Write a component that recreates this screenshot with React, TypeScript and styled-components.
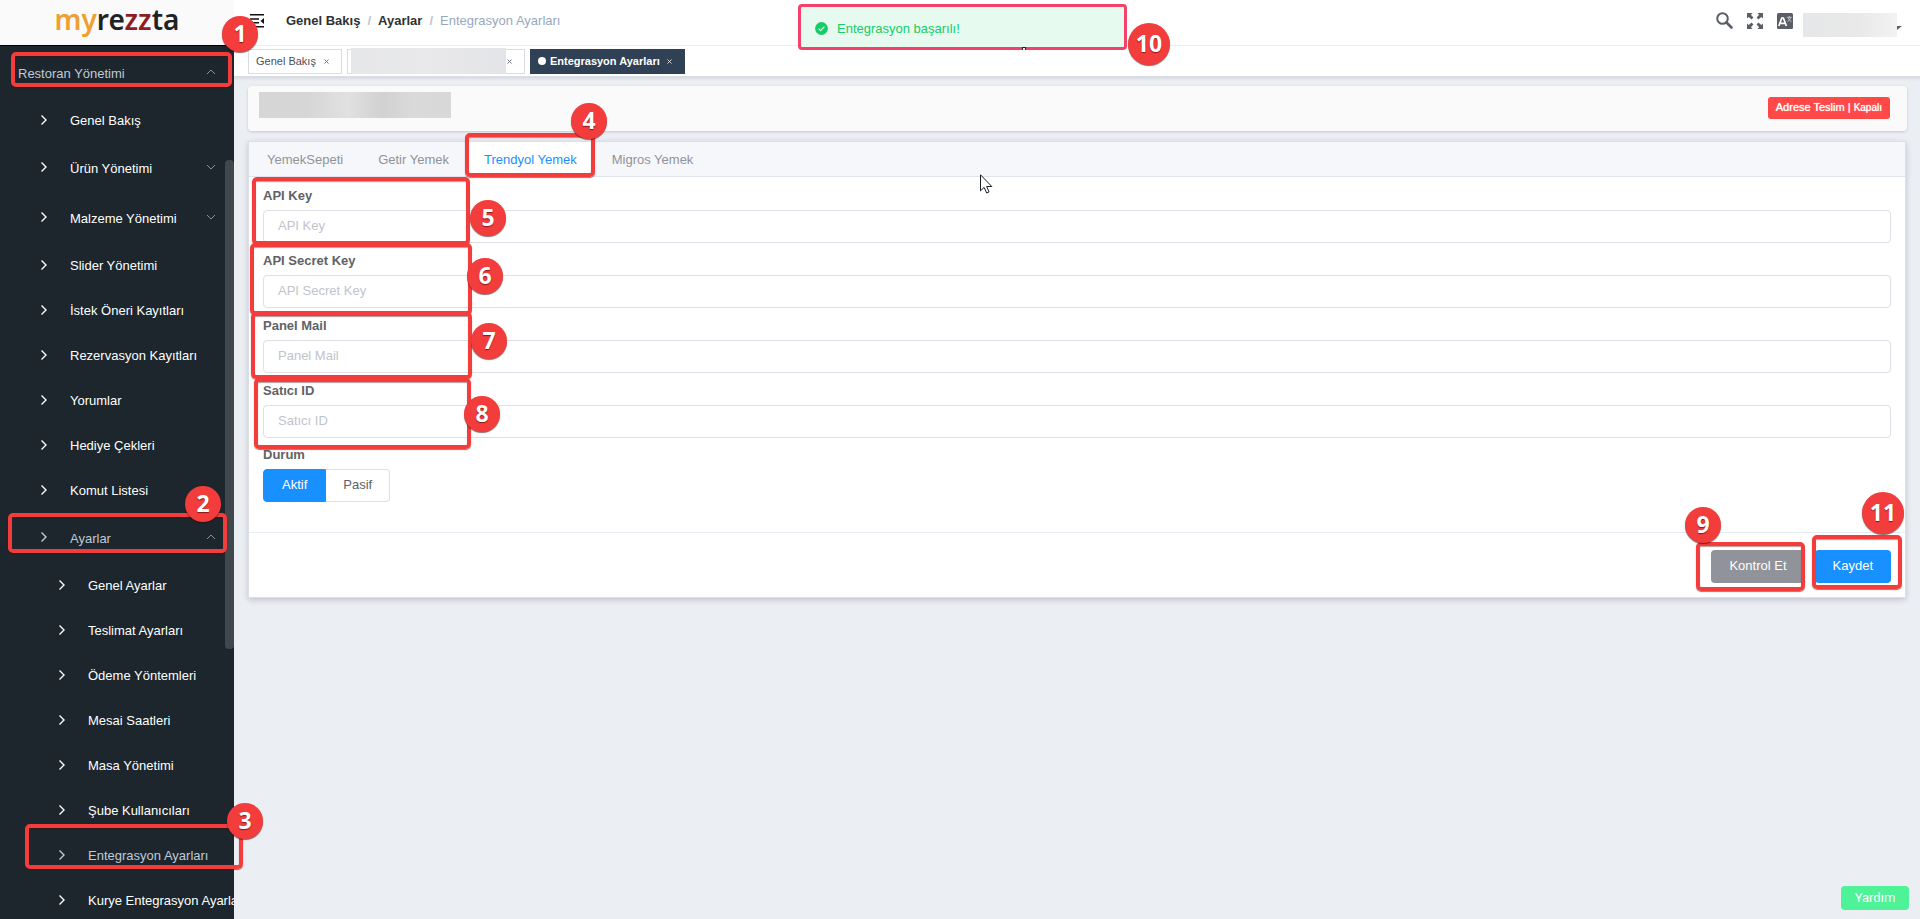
import React, { useState } from "react";
import styled, { createGlobalStyle, css } from "styled-components";

const GlobalStyle = createGlobalStyle`
  *, *::before, *::after { box-sizing: border-box; }
  body {
    margin: 0;
    background: #ebeef3;
    color: #606266;
    font-family: "Liberation Sans", Arial, sans-serif;
    font-size: 13px;
  }
  button, input { font: inherit; }
  a { color: inherit; text-decoration: none; }
`;

const red = "#f33c3c";

/* ---------- shell ---------- */

const Shell = styled.div`
  position: relative;
  display: grid;
  grid-template-columns: 234px minmax(0, 1fr);
  height: 100vh;
  overflow: hidden;
`;

const Sidebar = styled.aside`
  position: relative;
  display: flex;
  flex-direction: column;
  min-height: 0;
  overflow: hidden;
  background: #1c262c;
`;

const Logo = styled.a`
  flex: none;
  height: 46px;
  background: #fafafa;
  border-bottom: 1px solid #000;
  color: #222;
  font: 600 28px/38px "Noto Sans", sans-serif;
  text-align: center;
`;

const LogoPart = styled.span<{ $color: string }>`
  color: ${(p) => p.$color};
`;

const Menu = styled.ul`
  list-style: none;
  margin: 0;
  padding: 2px 0 0;
`;

const rowStyle = css<{ $level: number; $active?: boolean }>`
  display: flex;
  align-items: center;
  width: 100%;
  padding: 0 18px 0 ${(p) => (p.$level === 0 ? 18 : p.$level === 1 ? 38 : 56)}px;
  border: 0;
  background: none;
  color: ${(p) => (p.$active ? "#bfcbd9" : "#fff")};
  text-align: left;
  white-space: nowrap;
  cursor: pointer;
`;

const MenuLink = styled.a<{ $level: number; $active?: boolean }>`
  ${rowStyle}
  height: 45px;
`;

const MenuGroup = styled.button<{ $level: number; $active?: boolean }>`
  ${rowStyle}
  height: 50px;
`;

const MenuIcon = styled.svg`
  flex: none;
  width: 12px;
  height: 14px;
  margin-right: 20px;
  margin-bottom: 2px;
`;

const Caret = styled.svg`
  flex: none;
  width: 10px;
  height: 6px;
  margin-left: auto;
  margin-bottom: 2px;
`;

const ScrollThumb = styled.div`
  position: absolute;
  top: 160px;
  right: 0;
  width: 9px;
  height: 489px;
  border-radius: 4px;
  background: #40484e;
`;

const Main = styled.main`
  display: flex;
  flex-direction: column;
  min-width: 0;
`;

/* ---------- header ---------- */

const TopBar = styled.header`
  display: flex;
  align-items: center;
  height: 46px;
  padding: 0 18px 4px 16px;
  background: #fff;
  border-bottom: 1px solid #f0f1f3;
`;

const IconButton = styled.button`
  display: flex;
  padding: 0;
  border: 0;
  background: none;
  color: #5a5e66;
  cursor: pointer;
`;

const Crumbs = styled.nav`
  display: flex;
  gap: 7px;
  margin-left: 22px;
  color: #97a8be;
`;

const Crumb = styled.a`
  color: #303133;
  font-weight: 700;
`;

const Slash = styled.span`
  color: #c0c4cc;
  font-weight: 700;
`;

const Tools = styled.div`
  display: flex;
  align-items: center;
  gap: 14px;
  margin-left: auto;
`;

const Account = styled.button`
  display: flex;
  align-items: flex-end;
  margin: 9px 0 0 -4px;
  padding: 0;
  border: 0;
  background: none;
`;

const AccountMask = styled.span`
  width: 94px;
  height: 24px;
  background: linear-gradient(90deg, #e6e7e8, #e9e9e9 60%, #f2f2f2);
`;

const Triangle = styled.span`
  margin-bottom: 7px;
  border: 3px solid transparent;
  border-top: 4px solid #5a5e66;
  border-left: 0;
  border-right-width: 5px;
  border-bottom: 0;
`;

const TagBar = styled.div`
  display: flex;
  gap: 5px;
  flex: none;
  height: 32px;
  padding: 3px 14px 0;
  background: #fff;
  border-bottom: 2px solid #d8dce5;
  box-shadow: 0 1px 3px rgba(0, 0, 0, 0.08);
`;

const Tag = styled.div<{ $active?: boolean }>`
  display: flex;
  align-items: center;
  gap: ${(p) => (p.$active ? 6 : 7)}px;
  height: 25px;
  padding: 0 12px 1px 7px;
  border: 1px solid ${(p) => (p.$active ? "#304156" : "#d8dce5")};
  background: ${(p) => (p.$active ? "#304156" : "#fff")};
  color: ${(p) => (p.$active ? "#fff" : "#495060")};
  font-size: 11px;
  font-weight: ${(p) => (p.$active ? 700 : 400)};
`;

const TagMask = styled.span`
  width: 155px;
  height: 26px;
  margin: 0 -7px 0 -4px;
  background: linear-gradient(90deg, #e6e7e9, #e9e9eb 50%, #e3e4e7);
`;

const Dot = styled.span`
  width: 8px;
  height: 8px;
  margin-right: -2px;
  border-radius: 50%;
  background: #fff;
`;

const CloseTag = styled.button`
  display: flex;
  margin-top: 1px;
  margin-left: 1px;
  padding: 0;
  border: 0;
  background: none;
  color: inherit;
`;

/* ---------- content ---------- */

const Content = styled.div`
  display: flex;
  flex-direction: column;
  gap: 10px;
  padding: 8px 13px 0 14px;
`;

const BranchBar = styled.section`
  display: flex;
  justify-content: space-between;
  align-items: flex-start;
  height: 45px;
  padding: 6px 17px 0 11px;
  border-radius: 4px;
  background: #fafafa;
  box-shadow: 0 1px 3px rgba(0, 0, 0, 0.16);
`;

const BranchMask = styled.div`
  width: 192px;
  height: 26px;
  background: linear-gradient(90deg, #d6d6d6 0 25%, #e1e1e1 46%, #d1d1d1 64%, #dadada 80%, #d8d8d8);
`;

const StatusButton = styled.button`
  height: 22px;
  margin-top: 5px;
  padding: 0 8px 2px;
  border: 0;
  border-radius: 3px;
  background: #ff4949;
  color: #fff;
  font-size: 11px;
  text-shadow: 0 0 1px #fff;
`;

const Small = styled.span`
  font-size: 10px;
`;

const Card = styled.section`
  margin-right: 1px;
  border: 1px solid #dcdfe6;
  background: #fff;
  box-shadow: 0 2px 6px rgba(0, 0, 40, 0.18);
`;

const Tabs = styled.div`
  display: flex;
  height: 35px;
  border-bottom: 1px solid #dfe4ed;
  background: #f5f7fa;
`;

const Tab = styled.button<{ $active?: boolean }>`
  height: 34px;
  padding: 0 17px 0 18px;
  border: 0;
  background: ${(p) => (p.$active ? "#fff" : "none")};
  color: ${(p) => (p.$active ? "#1890ff" : "#909399")};
  cursor: pointer;
`;

const Form = styled.form`
  display: flex;
  flex-direction: column;
`;

const Fields = styled.div`
  display: flex;
  flex-direction: column;
  padding: 2px 14px 30px;
`;

const Field = styled.div`
  display: flex;
  flex-direction: column;
  height: 65px;
`;

const Label = styled.label`
  height: 31px;
  font-weight: 700;
  line-height: 33px;
`;

const Input = styled.input`
  width: 100%;
  height: 33px;
  padding: 0 14px 2px;
  border: 1px solid #dcdfe6;
  border-radius: 4px;
  background: #fff;
  color: #606266;
  outline: 0;
  &::placeholder { color: #c0c4cc; opacity: 1; }
`;

const RadioSet = styled.fieldset`
  margin: 0;
  padding: 0;
  border: 0;
`;

const Legend = styled.legend`
  padding: 0;
  height: 30px;
  font-weight: 700;
  line-height: 32px;
`;

const RadioRow = styled.div`
  display: flex;
`;

const Radio = styled.input`
  position: absolute;
  opacity: 0;
`;

const RadioLabel = styled.label<{ $on: boolean; $first?: boolean }>`
  height: 33px;
  padding: 0 ${(p) => (p.$first ? 18 : 17)}px;
  border: 1px solid ${(p) => (p.$on ? "#1890ff" : "#dcdfe6")};
  border-left-width: ${(p) => (p.$first ? 1 : 0)}px;
  border-radius: ${(p) => (p.$first ? "4px 0 0 4px" : "0 4px 4px 0")};
  background: ${(p) => (p.$on ? "#1890ff" : "#fff")};
  color: ${(p) => (p.$on ? "#fff" : "#606266")};
  line-height: 30px;
  cursor: pointer;
`;

const Actions = styled.div`
  display: flex;
  justify-content: flex-end;
  gap: 10px;
  padding: 17px 14px 14px;
  border-top: 1px solid #e6ebf5;
`;

const Action = styled.button<{ $tone: string }>`
  height: 33px;
  padding: 0 18px 2px;
  border: 0;
  border-radius: 4px;
  background: ${(p) => p.$tone};
  color: #fff;
`;

/* ---------- floating items ---------- */

const HelpButton = styled.button`
  position: absolute;
  right: 11px;
  bottom: 9px;
  width: 68px;
  height: 24px;
  padding: 0 0 2px;
  border: 0;
  border-radius: 4px;
  background: #4ef297;
  color: #fff;
  font: 400 13px Roboto, sans-serif;
`;

const Toast = styled.div`
  position: absolute;
  top: 4px;
  left: calc(50% - 162px);
  display: flex;
  align-items: center;
  gap: 9px;
  width: 329px;
  height: 46px;
  padding: 3px 14px 0;
  border: 3px solid #f2416b;
  border-radius: 4px;
  background: #e7faf0;
  color: #13ce66;
`;

const ResizeHandle = styled.span`
  position: absolute;
  bottom: -3px;
  left: 221px;
  width: 4px;
  height: 3px;
  border: 1px solid #222;
  border-bottom: 0;
  background: #fff;
`;

const Pointer = styled.svg`
  position: absolute;
  top: 174px;
  left: calc(50% + 20px);
  width: 13px;
  height: 20px;
`;

type Spot = { $x: number; $y: number; $from?: "left" | "right" | "center" };

const place = css<Spot>`
  position: absolute;
  top: ${(p) => p.$y}px;
  ${(p) =>
    p.$from === "right"
      ? `right: ${p.$x}px;`
      : p.$from === "center"
        ? `left: calc(50% + ${p.$x}px);`
        : `left: ${p.$x}px;`}
  pointer-events: none;
`;

const Frame = styled.div<Spot & { $w: number; $h: number }>`
  ${place}
  width: ${(p) => p.$w}px;
  height: ${(p) => p.$h}px;
  border: 4px solid ${red};
  border-radius: 5px;
  box-shadow: 0 1px 1px rgba(90, 0, 0, 0.55), inset 0 1px 1px rgba(90, 0, 0, 0.4);
`;

const Badge = styled.div<Spot & { $large?: boolean }>`
  ${place}
  display: flex;
  align-items: center;
  justify-content: center;
  width: ${(p) => (p.$large ? 42 : 36)}px;
  height: ${(p) => (p.$large ? 42 : 36)}px;
  padding-bottom: 1px;
  border-radius: 50%;
  background: ${red};
  box-shadow: 0 1px 1px rgba(60, 0, 0, 0.6);
  color: #fff;
  font: 700 23px/1 "Open Sans", sans-serif;
  text-shadow: 0 1px 1px rgba(60, 0, 0, 0.6);
`;

/* ---------- data ---------- */

type Entry = { text: string; level: number; group?: "open" | "closed"; active?: boolean };

const entries: Entry[] = [
  { text: "Restoran Yönetimi", level: 0, group: "open", active: true },
  { text: "Genel Bakış", level: 1 },
  { text: "Ürün Yönetimi", level: 1, group: "closed" },
  { text: "Malzeme Yönetimi", level: 1, group: "closed" },
  { text: "Slider Yönetimi", level: 1 },
  { text: "İstek Öneri Kayıtları", level: 1 },
  { text: "Rezervasyon Kayıtları", level: 1 },
  { text: "Yorumlar", level: 1 },
  { text: "Hediye Çekleri", level: 1 },
  { text: "Komut Listesi", level: 1 },
  { text: "Ayarlar", level: 1, group: "open", active: true },
  { text: "Genel Ayarlar", level: 2 },
  { text: "Teslimat Ayarları", level: 2 },
  { text: "Ödeme Yöntemleri", level: 2 },
  { text: "Mesai Saatleri", level: 2 },
  { text: "Masa Yönetimi", level: 2 },
  { text: "Şube Kullanıcıları", level: 2 },
  { text: "Entegrasyon Ayarları", level: 2, active: true },
  { text: "Kurye Entegrasyon Ayarları", level: 2 },
];

const tabs = ["YemekSepeti", "Getir Yemek", "Trendyol Yemek", "Migros Yemek"];

const fields = [
  { id: "api-key", label: "API Key" },
  { id: "api-secret", label: "API Secret Key" },
  { id: "panel-mail", label: "Panel Mail" },
  { id: "seller-id", label: "Satıcı ID" },
];

const frames: (Spot & { $w: number; $h: number })[] = [
  { $x: 11, $y: 52, $w: 221, $h: 35 },
  { $x: 8, $y: 513, $w: 219, $h: 40 },
  { $x: 25, $y: 824, $w: 218, $h: 45 },
  { $x: 465, $y: 133, $w: 130, $h: 44 },
  { $x: 252, $y: 177, $w: 218, $h: 68 },
  { $x: 250, $y: 243, $w: 222, $h: 72 },
  { $x: 251, $y: 312, $w: 221, $h: 67 },
  { $x: 254, $y: 378, $w: 217, $h: 71 },
  { $x: 115, $y: 542, $w: 109, $h: 49, $from: "right" },
  { $x: 18, $y: 535, $w: 90, $h: 54, $from: "right" },
];

const badges: (Spot & { n: number })[] = [
  { n: 1, $x: 222, $y: 16 },
  { n: 2, $x: 185, $y: 486 },
  { n: 3, $x: 227, $y: 803 },
  { n: 4, $x: 571, $y: 103 },
  { n: 5, $x: 470, $y: 200 },
  { n: 6, $x: 467, $y: 258 },
  { n: 7, $x: 471, $y: 323 },
  { n: 8, $x: 464, $y: 396 },
  { n: 9, $x: 199, $y: 507, $from: "right" },
  { n: 10, $x: 168, $y: 23, $from: "center" },
  { n: 11, $x: 16, $y: 492, $from: "right" },
];

/* ---------- icons ---------- */

const CloseIcon = () => (
  <svg width="5" height="5" viewBox="0 0 5 5" stroke="currentColor" strokeWidth="1">
    <path d="M.5 .5l4 4M4.5 .5l-4 4" opacity=".8" />
  </svg>
);

const FoldIcon = () => (
  <svg width="14" height="14" viewBox="0 0 14 14" fill="#111">
    <path d="M0 0h14v1.4H0zM0 4.3h9v1.4H0zM0 8h9v1.4H0zM0 12h14v1.4H0zM14 4v6l-3.5-3z" />
  </svg>
);

const SearchIcon = () => (
  <svg width="17" height="17" viewBox="0 0 17 17" fill="none" stroke="currentColor">
    <circle cx="6.5" cy="6.5" r="5.3" strokeWidth="2" />
    <path d="M10.5 10.5l5 5" strokeWidth="2.6" strokeLinecap="round" />
  </svg>
);

const ExpandIcon = () => (
  <svg width="16" height="16" viewBox="0 0 16 16" fill="currentColor">
    <path d="M0 0h5.6L3.9 1.7 6.4 4.6 4.6 6.4 1.7 3.9 0 5.6zM16 0v5.6l-1.7-1.7-2.9 2.5-1.8-1.8 2.5-2.9L10.4 0zM0 16v-5.6l1.7 1.7 2.9-2.5 1.8 1.8-2.5 2.9L5.6 16zM16 16h-5.6l1.7-1.7-2.5-2.9 1.8-1.8 2.9 2.5 1.7-1.7z" />
  </svg>
);

const LanguageIcon = () => (
  <svg width="16" height="16" viewBox="0 0 16 16">
    <rect width="16" height="16" rx="1.5" fill="currentColor" />
    <path d="M1.8 13l3-8h1.6l3 8M3 10.4h5" fill="none" stroke="#fff" strokeWidth="1.7" />
    <path d="M9.8 4.3h5M12.3 3v1.3M10.5 8.6c1.6-.8 2.8-2.3 3.2-4.2M14.5 8.6c-1.6-.8-2.9-2.3-3.3-4.2" fill="none" stroke="#d5d7da" strokeWidth=".8" />
  </svg>
);

const CheckIcon = () => (
  <svg width="13" height="13" viewBox="0 0 13 13">
    <circle cx="6.5" cy="6.5" r="6.4" fill="#13ce66" />
    <path d="M3.6 6.7l2 2 3.8-4" fill="none" stroke="#e7faf0" strokeWidth="1.2" />
  </svg>
);

function MenuRow({ entry }: { entry: Entry }) {
  const body = (
    <>
      {entry.level > 0 && (
        <MenuIcon viewBox="0 0 12 14" fill="none" stroke="currentColor" strokeWidth="1.4">
          <path d="M3.5 2.5L8 7l-4.5 4.5" />
        </MenuIcon>
      )}
      {entry.text}
      {entry.group && (
        <Caret viewBox="0 0 10 6" fill="none" stroke="#8b9399" strokeWidth="1">
          <path d={entry.group === "open" ? "M1 5l4-4 4 4" : "M1 1l4 4 4-4"} />
        </Caret>
      )}
    </>
  );
  return (
    <li>
      {entry.group ? (
        <MenuGroup $level={entry.level} $active={entry.active} aria-expanded={entry.group === "open"}>
          {body}
        </MenuGroup>
      ) : (
        <MenuLink href="#" $level={entry.level} $active={entry.active}>
          {body}
        </MenuLink>
      )}
    </li>
  );
}

export default function App() {
  const [tab, setTab] = useState(2);
  const [active, setActive] = useState(true);

  return (
    <Shell>
      <GlobalStyle />
      <Sidebar>
        <Logo href="#">
          <LogoPart $color="#eda033">my</LogoPart>re<LogoPart $color="#8e1c22">zz</LogoPart>ta
        </Logo>
        <Menu>
          {entries.map((entry) => (
            <MenuRow key={entry.text} entry={entry} />
          ))}
        </Menu>
        <ScrollThumb />
      </Sidebar>

      <Main>
        <TopBar>
          <IconButton aria-label="Menü"><FoldIcon /></IconButton>
          <Crumbs>
            <Crumb href="#">Genel Bakış</Crumb>
            <Slash>/</Slash>
            <Crumb href="#">Ayarlar</Crumb>
            <Slash>/</Slash>
            <span>Entegrasyon Ayarları</span>
          </Crumbs>
          <Tools>
            <IconButton aria-label="Ara"><SearchIcon /></IconButton>
            <IconButton aria-label="Tam ekran"><ExpandIcon /></IconButton>
            <IconButton aria-label="Dil"><LanguageIcon /></IconButton>
            <Account aria-label="Hesap"><AccountMask /><Triangle /></Account>
          </Tools>
        </TopBar>
        <TagBar>
          <Tag>Genel Bakış<CloseTag aria-label="Kapat"><CloseIcon /></CloseTag></Tag>
          <Tag><TagMask /><CloseTag aria-label="Kapat"><CloseIcon /></CloseTag></Tag>
          <Tag $active><Dot />Entegrasyon Ayarları<CloseTag aria-label="Kapat"><CloseIcon /></CloseTag></Tag>
        </TagBar>

        <Content>
          <BranchBar>
            <BranchMask />
            <StatusButton>Adrese Teslim | <Small>Kapalı</Small></StatusButton>
          </BranchBar>
          <Card>
            <Tabs role="tablist">
              {tabs.map((name, i) => (
                <Tab key={name} role="tab" aria-selected={i === tab} $active={i === tab} onClick={() => setTab(i)}>
                  {name}
                </Tab>
              ))}
            </Tabs>
            <Form onSubmit={(e) => e.preventDefault()}>
              <Fields>
                {fields.map((f) => (
                  <Field key={f.id}>
                    <Label htmlFor={f.id}>{f.label}</Label>
                    <Input id={f.id} placeholder={f.label} />
                  </Field>
                ))}
                <RadioSet>
                  <Legend>Durum</Legend>
                  <RadioRow>
                    <RadioLabel $first $on={active}>
                      <Radio type="radio" name="durum" checked={active} onChange={() => setActive(true)} />
                      Aktif
                    </RadioLabel>
                    <RadioLabel $on={!active}>
                      <Radio type="radio" name="durum" checked={!active} onChange={() => setActive(false)} />
                      Pasif
                    </RadioLabel>
                  </RadioRow>
                </RadioSet>
              </Fields>
              <Actions>
                <Action type="button" $tone="#909399">Kontrol Et</Action>
                <Action type="submit" $tone="#1890ff">Kaydet</Action>
              </Actions>
            </Form>
          </Card>
        </Content>
      </Main>

      <HelpButton>Yardım</HelpButton>
      <Toast role="status">
        <CheckIcon />
        Entegrasyon başarılı!
        <ResizeHandle />
      </Toast>
      {frames.map((f, i) => (
        <Frame key={i} {...f} />
      ))}
      {badges.map(({ n, ...spot }) => (
        <Badge key={n} {...spot} $large={n > 9}>{n}</Badge>
      ))}
      <Pointer viewBox="0 0 13 20" fill="#fff" stroke="#1a1a28" strokeWidth="1">
        <path d="M.5 .8v16l3.6-3.4 2.6 5.6 2.4-1.1-2.5-5.4h5.2z" />
      </Pointer>
    </Shell>
  );
}
